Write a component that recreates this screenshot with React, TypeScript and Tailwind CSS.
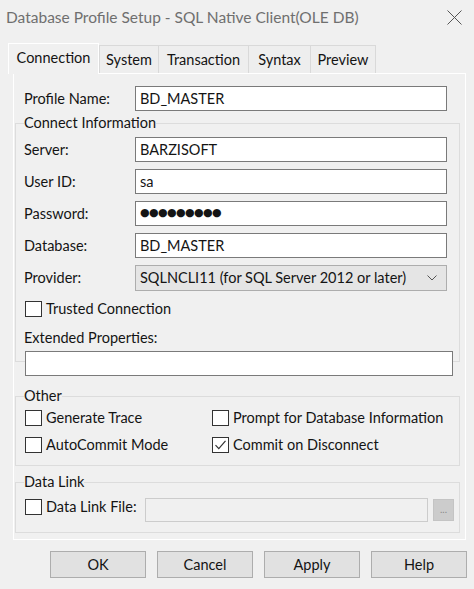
import React from "react";

function Box({ checked }: { checked?: boolean }) {
  return (
    <span className="w-[17px] h-[16px] border border-[#333333] bg-white flex items-center justify-center shrink-0">
      {checked && (
        <svg width="13" height="12" viewBox="0 0 13 12">
          <path d="M1.5 6.2 L4.8 9.6 L11.5 1.8" fill="none" stroke="#333" strokeWidth="1.2" />
        </svg>
      )}
    </span>
  );
}

function Check({ label, checked }: { label: string; checked?: boolean }) {
  return (
    <div className="h-[18px] flex items-center gap-[4px] ml-[1px]">
      <Box checked={checked} />
      <span className="leading-[18px]">{label}</span>
    </div>
  );
}

function Field({ label, value, big }: { label: string; value: string; big?: boolean }) {
  return (
    <div className="h-[25px] flex items-center">
      <span className="w-[111px] leading-[18px]">{label}</span>
      <div className="w-[312px] h-[25px] border border-[#7a7a7a] bg-white flex items-center pl-[4px]">
        {big ? (
          <span className="text-[11px] tracking-[-0.6px] font-['DejaVu_Sans',sans-serif]">{value}</span>
        ) : (
          <span className="leading-[18px]">{value}</span>
        )}
      </div>
    </div>
  );
}

export default function App() {
  return (
    <div className="w-[474px] h-[589px] bg-[#f0f0f0] flex flex-col font-['Lato','Segoe_UI',sans-serif] text-[14.5px] text-[#141414] overflow-hidden">
      <div className="h-[35px] flex items-center justify-between pl-[6px] pr-[12px]">
        <span className="text-[15.5px] text-[#6f6f6f]">Database Profile Setup - SQL Native Client(OLE DB)</span>
        <svg width="15" height="15" viewBox="0 0 15 15">
          <path d="M0.5 0.5 L14.5 14.5 M14.5 0.5 L0.5 14.5" stroke="#555" strokeWidth="1" fill="none" />
        </svg>
      </div>

      <div className="mt-[8px] h-[30px] flex items-end pl-[8px] relative z-10">
        <div className="w-[91px] h-[31px] -mb-[1px] bg-[#f0f0f0] border border-b-0 border-white flex items-center justify-center pb-[3px]">
          Connection
        </div>
        <div className="w-[59px] h-[28px] border-t border-l border-[#d9d9d9] bg-[#eeeeee] flex items-center justify-center">
          System
        </div>
        <div className="w-[90px] h-[28px] border-t border-l border-[#d9d9d9] bg-[#eeeeee] flex items-center justify-center">
          Transaction
        </div>
        <div className="w-[62px] h-[28px] border-t border-l border-[#d9d9d9] bg-[#eeeeee] flex items-center justify-center">
          Syntax
        </div>
        <div className="w-[66px] h-[28px] border-t border-l border-r border-[#d9d9d9] bg-[#eeeeee] flex items-center justify-center">
          Preview
        </div>
      </div>

      <div className="ml-[13px] w-[453px] h-[467px] border border-white bg-[#f0f0f0] flex flex-col pt-[12px]">
        <div className="pl-[10px]">
          <Field label="Profile Name:" value="BD_MASTER" />
        </div>

        <fieldset className="mt-[3px] ml-[1px] w-[445px] border border-[#dcdcdc] pl-[8px] pt-[5px]">
          <legend className="leading-[18px]">Connect Information</legend>
          <div className="flex flex-col gap-[7px]">
            <Field label="Server:" value="BARZISOFT" />
            <Field label="User ID:" value="sa" />
            <Field label="Password:" value="●●●●●●●●●" big />
            <Field label="Database:" value="BD_MASTER" />
            <div className="h-[25px] flex items-center">
              <span className="w-[111px] leading-[18px]">Provider:</span>
              <div className="w-[312px] h-[26px] border border-[#adadad] bg-[#e5e5e5] flex items-center justify-between pl-[4px] pr-[9px]">
                <span className="leading-[18px]">SQLNCLI11 (for SQL Server 2012 or later)</span>
                <svg width="10" height="6" viewBox="0 0 10 6">
                  <path d="M0.5 0.5 L5 5 L9.5 0.5" fill="none" stroke="#555" strokeWidth="1" />
                </svg>
              </div>
            </div>
          </div>
          <div className="mt-[10px]">
            <Check label="Trusted Connection" />
          </div>
          <div className="mt-[11px] h-[18px] leading-[18px]">Extended Properties:</div>
          <div className="mt-[4px] ml-[1px] w-[428px] h-[25px] border border-[#7a7a7a] bg-white -mb-[15px]" />
        </fieldset>

        <fieldset className="mt-[25px] ml-[1px] w-[445px] border border-[#dcdcdc] pl-[8px] pt-[4px] pb-[11px]">
          <legend className="leading-[18px]">Other</legend>
          <div className="grid grid-cols-[187px_1fr] gap-y-[9px]">
            <Check label="Generate Trace" />
            <Check label="Prompt for Database Information" />
            <Check label="AutoCommit Mode" />
            <Check label="Commit on Disconnect" checked />
          </div>
        </fieldset>

        <fieldset className="mt-[7px] ml-[1px] w-[445px] border border-[#dcdcdc] pl-[8px] pt-[7px] pb-[10px]">
          <legend className="leading-[18px]">Data Link</legend>
          <div className="h-[24px] flex items-start">
            <div className="w-[121px]">
              <Check label="Data Link File:" />
            </div>
            <div className="w-[283px] h-[24px] border border-[#cccccc] bg-[#f0f0f0]" />
            <div className="ml-[5px] mt-[1px] w-[21px] h-[22px] border border-[#c4c4c4] bg-[#cccccc] flex items-center justify-center text-[10px] text-[#8a8a8a] leading-none pb-[2px]">
              ...
            </div>
          </div>
        </fieldset>
      </div>

      <div className="mt-[11px] ml-[50px] flex gap-[11px]">
        {["OK", "Cancel", "Apply", "Help"].map((b) => (
          <div
            key={b}
            className="w-[96px] h-[27px] border border-[#adadad] bg-[#e1e1e1] flex items-center justify-center leading-[18px]"
          >
            {b}
          </div>
        ))}
      </div>
    </div>
  );
}
